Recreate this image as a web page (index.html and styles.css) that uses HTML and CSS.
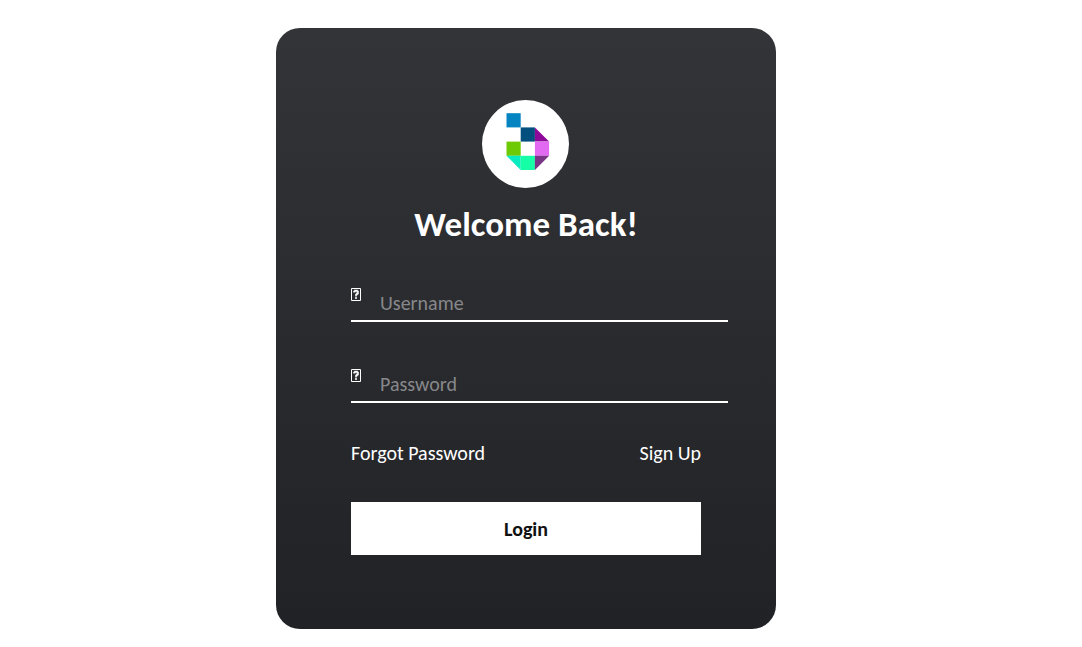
FILE: index.html
```html
<!DOCTYPE html>
<html lang="en">
<head>
<meta charset="utf-8">
<meta name="viewport" content="width=device-width, initial-scale=1">
<title>Login</title>
<link rel="stylesheet" href="styles.css">
</head>
<body>
<main class="card">
  <form class="form">
    <svg class="logo" viewBox="0 0 88 88" aria-hidden="true">
      <ellipse cx="43.5" cy="44" rx="43.5" ry="44" fill="#fff"/>
      <path d="M24.5 13.2h14.2v14.2H24.5z" fill="#0484c0"/>
      <path d="M38.7 27.4h14.2v14.2H38.7z" fill="#03507f"/>
      <path d="M52.9 27.4l14.2 14.2H52.9z" fill="#8c0999"/>
      <path d="M24.5 41.6h14.2v14.2H24.5z" fill="#6dca04"/>
      <path d="M52.9 41.6h14.2v14.2H52.9z" fill="#e26af3"/>
      <path d="M24.5 55.8h14.2V70z" fill="#08eac0"/>
      <path d="M38.7 55.8h14.2V70H38.7z" fill="#14ffa6"/>
      <path d="M52.9 55.8h14.2L52.9 70z" fill="#793585"/>
    </svg>
    <h1 class="title">Welcome Back!</h1>
    <div class="field">
      <svg class="glyph" viewBox="0 0 10 13" aria-hidden="true"><path d="M.5.5h9v12h-9z"/><path class="mark" d="M3 4.5v-1h1v-1h2v1h1v2H6v1H5v2M5 9v2"/></svg>
      <input class="input" type="text" placeholder="Username" aria-label="Username">
    </div>
    <div class="field">
      <svg class="glyph" viewBox="0 0 10 13" aria-hidden="true"><path d="M.5.5h9v12h-9z"/><path class="mark" d="M3 4.5v-1h1v-1h2v1h1v2H6v1H5v2M5 9v2"/></svg>
      <input class="input" type="password" placeholder="Password" aria-label="Password">
    </div>
    <div class="links">
      <a class="link" href="#">Forgot Password</a>
      <a class="link" href="#">Sign Up</a>
    </div>
    <button class="login" type="submit">Login</button>
  </form>
</main>
</body>
</html>
```
FILE: styles.css
```css
* {
  box-sizing: border-box;
}

body {
  margin: 0;
  padding: 28px 30px 18px 0;
  background: #fff;
  font-family: Carlito, Calibri, Lato, sans-serif;
}

.card {
  width: 100%;
  max-width: 500px;
  margin: 0 auto;
  padding: 72px 48px 74px 75px;
  border-radius: 24px;
  background: linear-gradient(#333437, #212226);
  color: #fff;
}

.form {
  display: flex;
  flex-direction: column;
}

.logo {
  width: 88px;
  height: 88px;
  margin: 0 27px 0 0;
  align-self: center;
}

.title {
  margin: 16px 27px 0 0;
  font-size: 35px;
  font-weight: 700;
  line-height: 40px;
  text-align: center;
}

.field {
  display: flex;
  align-items: flex-start;
  gap: 19px;
  height: 39px;
  margin-top: 42px;
  padding-top: 5px;
  border-bottom: 2px solid #fff;
}

.title + .field {
  margin-top: 39px;
}

.glyph {
  width: 10px;
  height: 13px;
  flex: none;
  fill: none;
  stroke: #fff;
}

.mark {
  stroke-width: 1.5;
}

.input {
  flex: 1;
  min-width: 0;
  height: 30px;
  padding: 0;
  border: 0;
  outline: 0;
  background: transparent;
  color: #fff;
  font: inherit;
  font-size: 20px;
}

.input::placeholder {
  color: #87888a;
  opacity: 1;
}

.links {
  display: flex;
  justify-content: space-between;
  margin: 38px 27px 0 0;
}

.link {
  color: #fff;
  font-size: 20px;
  line-height: 24px;
  text-decoration: none;
}

.login {
  height: 53px;
  margin: 37px 27px 0 0;
  border: 0;
  background: #fff;
  color: #111;
  font: inherit;
  font-size: 20px;
  font-weight: 700;
}
```
